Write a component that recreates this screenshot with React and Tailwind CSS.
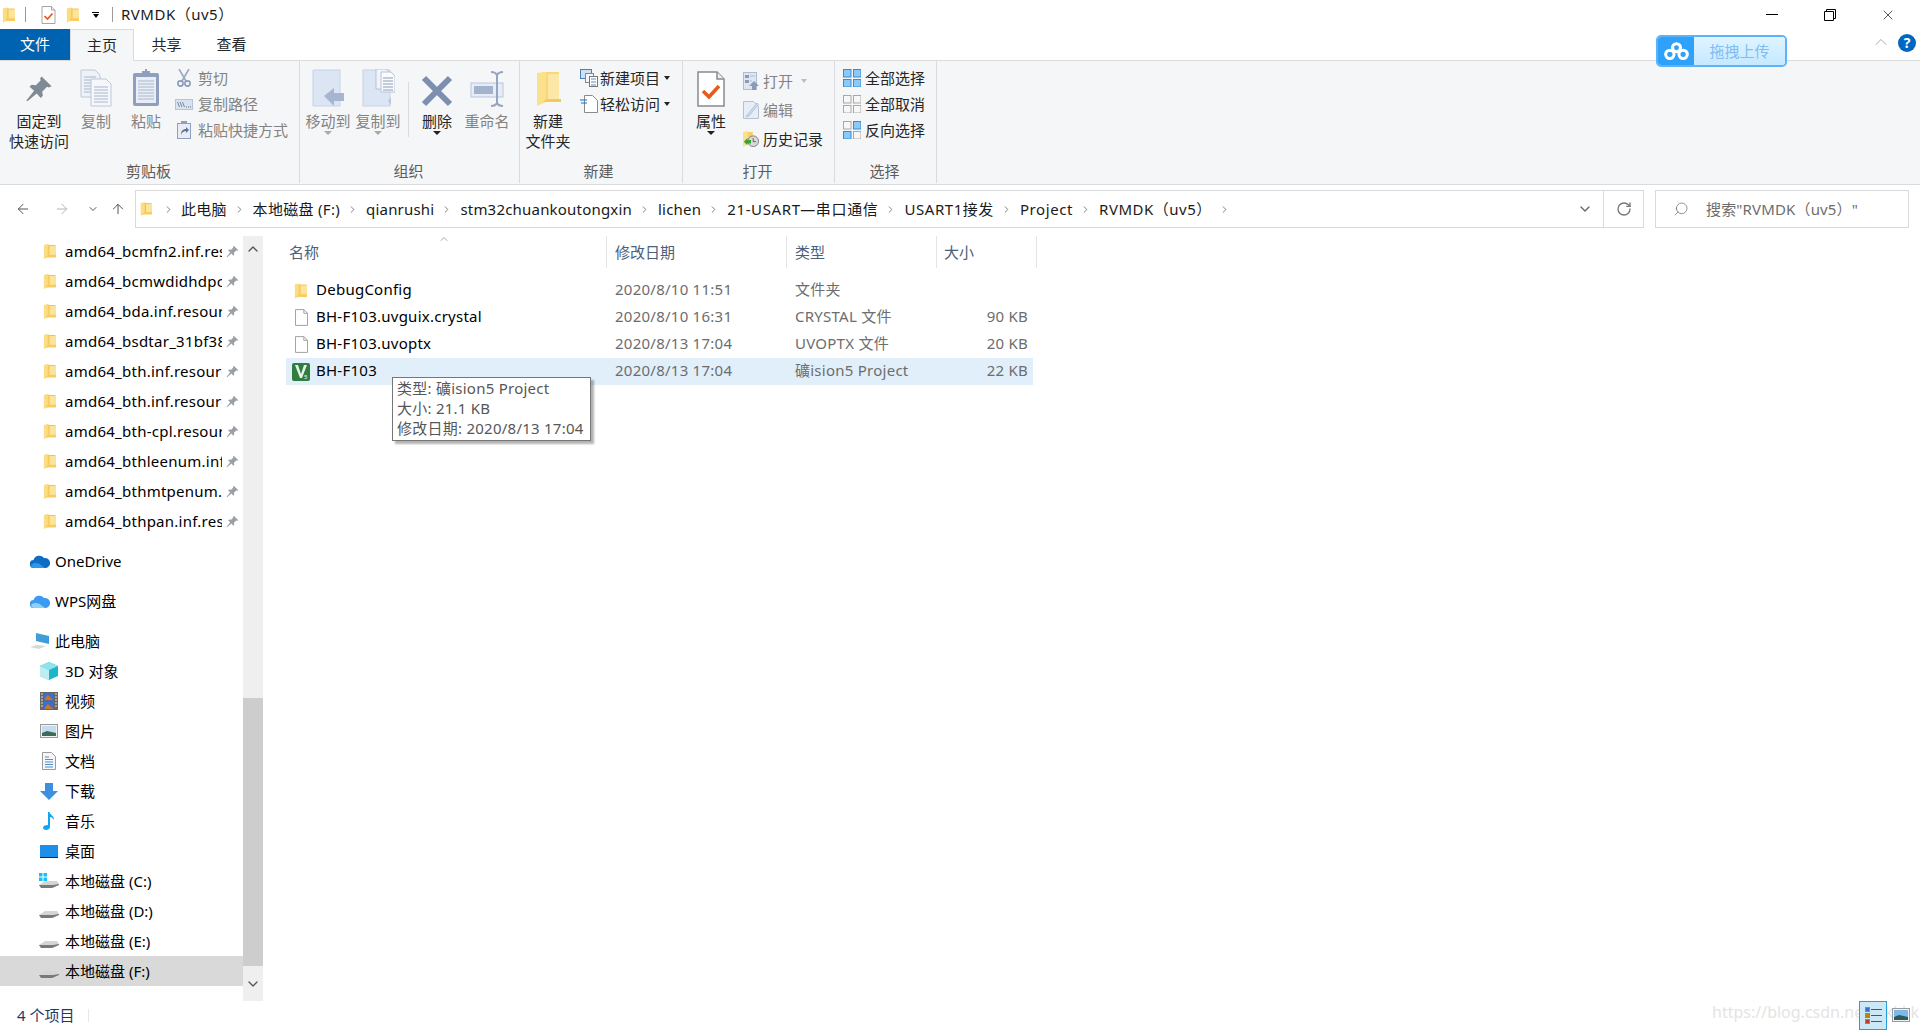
import { ArrowLeft, ArrowRight, ArrowUp, ChevronDown, ChevronRight, ChevronUp, RotateCw, Search, X } from "lucide-react";

const FONT = "font-['Noto_Sans','Noto_Sans_CJK_SC',sans-serif]";

const Folder = ({ className = "w-[14px] h-[17px]" }) => (
  <svg viewBox="0 0 14 17" className={className}>
    <path d="M4 1.5h9.5v12.5H4z" fill="#f2c14e" />
    <path d="M7 2.5h6.5v11H7z" fill="#fde49b" />
    <path d="M1 1.5 6 .5v13.5L1 16.5z" fill="#f9d36d" />
    <path d="M1 2 5 1v13l-4 2z" fill="#fcdc85" />
    <path d="M5 12h9v3H3z" fill="#f7cd61" />
  </svg>
);

const Pin = ({ className = "w-[13px] h-[13px]", fill = "#9aa0a6" }) => (
  <svg viewBox="0 0 16 16" className={className}>
    <path d="M9.5.8 15.2 6.4l-1.6.8-1-.5-2.8 2.8.4 2.4-1.2 1.2-2.3-2.5L1.4 15l-.6-.5 4.4-5.5-2.6-2.3L3.8 5.5l2.4.4L9 3l-.4-1z" fill={fill} />
  </svg>
);

const Doc = ({ className = "w-[14px] h-[18px]" }) => (
  <svg viewBox="0 0 14 18" className={className}>
    <path d="M.5.5h9l4 4v13H.5z" fill="#fff" stroke="#9b9b9b" />
    <path d="M9.5.5v4h4" fill="none" stroke="#9b9b9b" />
  </svg>
);

const CheckDoc = ({ className = "w-[15px] h-[18px]" }) => (
  <svg viewBox="0 0 28 36" className={className}>
    <path d="M1 1h19l7 7v27H1z" fill="#fff" stroke="#8a8a8a" strokeWidth="1.5" />
    <path d="M20 1v7h7" fill="#eee" stroke="#8a8a8a" strokeWidth="1.5" />
    <path d="M6 20l6 6 10-11" fill="none" stroke="#e8591c" strokeWidth="3.5" />
  </svg>
);

const Lines = ({ x, y, w, n, gap = 3, color = "#a9b6cc" }) => (
  <>
    {Array.from({ length: n }, (_, i) => (
      <path key={i} d={`M${x} ${y + i * gap}h${w}`} stroke={color} strokeWidth="1" />
    ))}
  </>
);

const CopyIcon = () => (
  <svg viewBox="0 0 32 38" className="w-[32px] h-[38px]">
    <path d="M1 1h14l5 5v22H1z" fill="#eef2f8" stroke="#bcc8da" />
    <Lines x={4} y={8} w={12} n={6} />
    <path d="M11 10h15l5 5v22H11z" fill="#f5f7fb" stroke="#bcc8da" />
    <Lines x={14} y={18} w={14} n={6} gap={3} />
  </svg>
);

const PasteIcon = () => (
  <svg viewBox="0 0 28 38" className="w-[28px] h-[38px]">
    <rect x="1" y="4" width="26" height="33" rx="2" fill="#8f9fbd" />
    <rect x="4" y="8" width="20" height="26" fill="#e9eef6" />
    <Lines x={6} y={12} w={16} n={7} />
    <path d="M10 5V2h3V0h2v2h3v3l2 2H8z" fill="#8f9fbd" />
  </svg>
);

const MoveIcon = ({ copy }) => (
  <svg viewBox="0 0 33 38" className="w-[33px] h-[38px]">
    <path d="M1 1h27v36H1z" fill="#dbe5f3" stroke="#c6d3e7" />
    {copy ? (
      <>
        <path d="M14 0h10l4 4v16H14z" fill="#f1f4f9" stroke="#b6c3d8" />
        <path d="M19 3h10l4 4v16H19z" fill="#fafbfd" stroke="#b6c3d8" />
        <Lines x={21} y={9} w={10} n={5} color="#8d9cb8" />
        <path d="M26 32l3-4v8z" fill="#b9c7dc" />
      </>
    ) : (
      <path d="M12 27l10-8v5h10v8H22v5z" fill="#a7b6d0" />
    )}
  </svg>
);

const DeleteIcon = () => (
  <svg viewBox="0 0 32 32" className="w-[32px] h-[32px]">
    <path d="M3 3l26 26M29 3 3 29" stroke="#7d8fb0" strokeWidth="6" />
  </svg>
);

const RenameIcon = () => (
  <svg viewBox="0 0 34 36" className="w-[34px] h-[36px]">
    <rect x="1" y="12" width="32" height="14" fill="#e7edf7" stroke="#b7c5db" />
    <rect x="4" y="15" width="19" height="8" fill="#a3b3cd" />
    <path d="M21 1c3 0 5 1 6 3 1-2 3-3 6-3M27 4v28M21 35c3 0 5-1 6-3 1 2 3 3 6 3" fill="none" stroke="#95a5c1" strokeWidth="2" />
  </svg>
);

const BigFolder = () => (
  <svg viewBox="0 0 25 36" className="w-[25px] h-[36px]">
    <path d="M6 1h17v28H6z" fill="#f7d777" />
    <path d="M12 3h11v26H12z" fill="#fce7a6" />
    <path d="M1 2l9-1v30l-9 4z" fill="#fbe08e" />
    <path d="M10 28h15v3H7z" fill="#f3c95c" />
  </svg>
);

const CutIcon = () => (
  <svg viewBox="0 0 14 18" className="w-[14px] h-[18px]">
    <path d="M2 0l7 12M12 0 5 12" stroke="#9aa8c0" strokeWidth="1.6" fill="none" />
    <circle cx="3.5" cy="14.5" r="2.6" fill="none" stroke="#8b9bb8" strokeWidth="1.6" />
    <circle cx="10.5" cy="14.5" r="2.6" fill="none" stroke="#8b9bb8" strokeWidth="1.6" />
  </svg>
);

const PathIcon = () => (
  <svg viewBox="0 0 18 11" className="w-[18px] h-[11px]">
    <rect x=".5" y=".5" width="17" height="10" fill="#d9e3f0" stroke="#b6c3d8" />
    <path d="M2.5 3l2 5M5 3l2 5M7.500 3l2 5" stroke="#5d6f8d" strokeWidth=".8" />
    <path d="M11 8h1M13 8h1M15 8h1" stroke="#5d6f8d" />
  </svg>
);

const ShortcutIcon = () => (
  <svg viewBox="0 0 14 18" className="w-[14px] h-[18px]">
    <rect x=".5" y="2.5" width="13" height="15" fill="#e8edf5" stroke="#8f9fbd" />
    <rect x="4" y="0" width="6" height="3" fill="#8f9fbd" />
    <path d="M4 14c0-4 2-6 5-6V6l3 3-3 3v-2c-2 0-4 1-5 4z" fill="#5e7196" />
  </svg>
);

const NewItemIcon = () => (
  <svg viewBox="0 0 18 18" className="w-[18px] h-[18px]">
    <rect x=".5" y=".5" width="11" height="9" fill="#cfe2f5" stroke="#4f7fb0" />
    <rect x="5.5" y="4.5" width="8" height="9" fill="#f7f7f7" stroke="#888" />
    <rect x="9.5" y="7.5" width="8" height="10" fill="#fff" stroke="#777" />
    <Lines x={11} y={10} w={5} n={3} color="#5e8fc0" />
  </svg>
);

const EasyIcon = () => (
  <svg viewBox="0 0 18 18" className="w-[18px] h-[18px]">
    <path d="M4.500.5h8l5 5v12h-13z" fill="#fff" stroke="#8a8a8a" />
    <path d="M0 5h7M1 8h6" stroke="#1c6fc0" strokeWidth="1.2" />
  </svg>
);

const OpenIcon = () => (
  <svg viewBox="0 0 16 18" className="w-[16px] h-[18px]">
    <rect x=".5" y=".5" width="13" height="17" fill="#dfe6f1" stroke="#aebcd2" />
    <rect x="2" y="3" width="4" height="3" fill="#8a9bb8" />
    <rect x="2" y="8" width="4" height="3" fill="#8a9bb8" />
    <path d="M7 4h5M7 9h2" stroke="#aebcd2" />
    <path d="M11 9l5 5h-3v4H9v-4H6z" fill="#8a9bb8" />
  </svg>
);

const EditIcon = () => (
  <svg viewBox="0 0 16 18" className="w-[16px] h-[18px]">
    <path d="M.5.5h10l5 5v12H.5z" fill="#e8eef7" stroke="#b3c1d7" />
    <path d="M4 14 14 2l1.500 1.500L6 15l-3 1z" fill="#cfd9e8" stroke="#a8b7cf" strokeWidth=".7" />
  </svg>
);

const HistoryIcon = () => (
  <svg viewBox="0 0 18 18" className="w-[18px] h-[18px]">
    <path d="M0 1l5-1v15l-5 3z" fill="#fbe08e" />
    <path d="M5 1h6v12H5z" fill="#f5cf68" />
    <circle cx="11.5" cy="11.5" r="6" fill="#d9d9d9" stroke="#777" />
    <path d="M11.5 8v4h3" fill="none" stroke="#555" />
    <path d="M1 12l4-4v2h4v4H5v2z" fill="#35a53a" />
  </svg>
);

const Grid = ({ a, b, c, d }) => (
  <svg viewBox="0 0 18 18" className="w-[18px] h-[18px]">
    {[[0, 0, a], [10, 0, b], [0, 10, c], [10, 10, d]].map(([x, y, on]) => (
      <rect
        key={`${x}${y}`}
        x={x + 0.5}
        y={y + 0.5}
        width="7.5"
        height="7.5"
        fill={on ? "#8ec8f5" : "#f7f7f7"}
        stroke={on ? "#2e8fdc" : "#a8a8a8"}
      />
    ))}
  </svg>
);

const BigBtn = ({ icon, lines, gray, caret, w = "w-[50px]", h = "h-[50px]" }) => (
  <div className={`${w} flex flex-col items-center shrink-0`}>
    <div className={`${h} flex items-end justify-center pb-[4px]`}>{icon}</div>
    <div className={`text-center leading-[20px] ${gray ? "text-[#838383]" : "text-[#262626]"}`}>
      {lines.map((l) => (
        <div key={l} className="whitespace-nowrap">{l}</div>
      ))}
    </div>
    {caret && <div className={`mt-0 w-0 h-0 border-x-[4px] border-t-[4px] border-x-transparent ${caret}`} />}
  </div>
);

const SmallBtn = ({ icon, label, gray, caret, iconW = "w-[18px]", h = "h-[26px]", gap = "gap-[5px]" }) => (
  <div className={`flex items-center ${h} ${gap} whitespace-nowrap ${gray ? "text-[#838383]" : "text-[#262626]"}`}>
    <div className={`${iconW} flex justify-center`}>{icon}</div>
    <span>{label}</span>
    {caret && <div className={`ml-[1px] w-0 h-0 border-x-[3.5px] border-t-[4px] border-x-transparent ${caret}`} />}
  </div>
);

const Group = ({ label, width, children, labelPad = "pr-[2px]" }) => (
  <div className={`${width} h-full flex flex-col border-r border-[#dadbdc] shrink-0`}>
    <div className="flex-1 flex">{children}</div>
    <div className={`h-[26px] text-center text-[#5c5c5c] leading-[28px] ${labelPad}`}>{label}</div>
  </div>
);

const Ribbon = () => (
  <div className="h-[124px] bg-[#f5f6f7] border-b border-[#dadbdc] flex pb-[1px]">
    <Group label="剪贴板" width="w-[300px]">
      <BigBtn w="w-[70px] ml-[4px] -mr-[3px]" icon={<Pin className="w-[28px] h-[28px] mb-[4px]" fill="#7f8a94" />} lines={["固定到", "快速访问"]} />
      <BigBtn icon={<CopyIcon />} lines={["复制"]} gray />
      <BigBtn icon={<PasteIcon />} lines={["粘贴"]} gray />
      <div className="pt-[4px] ml-[4px]">
        <SmallBtn gray icon={<CutIcon />} label="剪切" />
        <SmallBtn gray icon={<PathIcon />} label="复制路径" />
        <SmallBtn gray icon={<ShortcutIcon />} label="粘贴快捷方式" />
      </div>
    </Group>
    <Group label="组织" width="w-[220px]">
      <div className="ml-[3px] flex h-[55px] border-r border-[#dadbdc] mt-[21px] pr-[5px]">
        <div className="-mt-[21px] flex">
          <BigBtn icon={<MoveIcon />} lines={["移动到"]} gray caret="border-t-[#a9a9a9]" />
          <BigBtn icon={<MoveIcon copy />} lines={["复制到"]} gray caret="border-t-[#a9a9a9]" />
        </div>
      </div>
      <div className="ml-[3px] flex">
        <BigBtn icon={<DeleteIcon />} lines={["删除"]} caret="border-t-[#222]" />
        <BigBtn icon={<RenameIcon />} lines={["重命名"]} gray />
      </div>
    </Group>
    <Group label="新建" width="w-[163px]" labelPad="pr-[5px]">
      <BigBtn w="w-[56px]" icon={<BigFolder />} lines={["新建", "文件夹"]} />
      <div className="pt-[4px] ml-[3px]">
        <SmallBtn gap="gap-[2px]" iconW="w-[19px]" icon={<NewItemIcon />} label="新建项目" caret="border-t-[#222] ml-[2px]" />
        <SmallBtn gap="gap-[2px]" iconW="w-[19px]" icon={<EasyIcon />} label="轻松访问" caret="border-t-[#222] ml-[2px]" />
      </div>
    </Group>
    <Group label="打开" width="w-[152px]">
      <BigBtn w="w-[56px]" icon={<CheckDoc className="w-[28px] h-[36px]" />} lines={["属性"]} caret="border-t-[#222]" />
      <div className="pt-[5px] ml-[4px]">
        <SmallBtn gap="gap-[4px]" h="h-[29px]" iconW="w-[16px]" gray icon={<OpenIcon />} label="打开" caret="border-t-[#bdbdbd] ml-[4px]" />
        <SmallBtn gap="gap-[4px]" h="h-[29px]" iconW="w-[16px]" gray icon={<EditIcon />} label="编辑" />
        <SmallBtn gap="gap-[4px]" h="h-[29px]" iconW="w-[16px]" icon={<HistoryIcon />} label="历史记录" />
      </div>
    </Group>
    <Group label="选择" width="w-[102px]">
      <div className="pt-[4px] pl-[8px]">
        <SmallBtn gap="gap-[4px]" icon={<Grid a b c d />} label="全部选择" />
        <SmallBtn gap="gap-[4px]" icon={<Grid />} label="全部取消" />
        <SmallBtn gap="gap-[4px]" icon={<Grid b c />} label="反向选择" />
      </div>
    </Group>
  </div>
);

const WinButtons = () => (
  <div className="ml-auto flex items-center pr-[26px] gap-[46px]">
    <div className="w-[12px] h-[1px] bg-black" />
    <svg viewBox="0 0 12 12" className="w-[12px] h-[12px]">
      <path d="M.5 2.5h9v9h-9zM2.5 2.5v-2h9v9h-2" fill="none" stroke="#000" />
    </svg>
    <X className="w-[16px] h-[16px] -mx-[2px]" strokeWidth={1} color="#000" />
  </div>
);

const TitleBar = () => (
  <div className="h-[29px] flex items-center bg-white">
    <div className="w-[12px] ml-[2px] mr-[11px]"><Folder className="w-[13px] h-[16px]" /></div>
    <div className="w-[1px] h-[15px] bg-[#9a9a9a]" />
    <div className="ml-[15px]"><CheckDoc /></div>
    <div className="ml-[10px]"><Folder className="w-[13px] h-[16px]" /></div>
    <div className="ml-[13px] flex flex-col items-center gap-[1px]">
      <div className="w-[7px] h-[1px] bg-black" />
      <div className="w-0 h-0 border-x-[3.5px] border-t-[4px] border-x-transparent border-t-black" />
    </div>
    <div className="ml-[13px] w-[1px] h-[15px] bg-[#9a9a9a]" />
    <span className="ml-[8px] pb-[2px] text-[15px] text-[#1a1a1a] tracking-[0.5px]">RVMDK（uv5）</span>
    <WinButtons />
  </div>
);

const TabBar = () => (
  <div className="h-[32px] flex relative border-b border-[#dadbdc]">
    <div className="w-[70px] h-[31px] pb-[2px] bg-[#0063b1] text-white flex items-center justify-center">文件</div>
    <div className="w-[64px] h-[32px] pb-[2px] bg-[#f5f6f7] border-x border-t border-[#dadbdc] flex items-center justify-center text-[#262626]">主页</div>
    <div className="w-[65px] pb-[2px] flex items-center justify-center text-[#262626]">共享</div>
    <div className="w-[65px] pb-[2px] flex items-center justify-center text-[#262626]">查看</div>
    <div className="absolute left-[1656px] top-[6px] w-[131px] h-[32px] rounded-[5px] border-2 border-[#5cb3fa] flex overflow-hidden z-10">
      <div className="w-[36px] bg-[#2ea1fb] flex items-center justify-center">
        <svg viewBox="0 0 26 20" className="w-[25px] h-[19px]">
          <g fill="none" stroke="#fff" strokeWidth="3.2">
            <circle cx="13" cy="6" r="4.2" />
            <circle cx="6" cy="13" r="4.4" />
            <circle cx="20" cy="13" r="4.4" />
          </g>
        </svg>
      </div>
      <div className="flex-1 bg-gradient-to-b from-[#dff4ff] to-[#c5e9ff] text-[#7fbdf3] flex items-center justify-center">拖拽上传</div>
    </div>
    <ChevronUp className="absolute left-[1871px] top-[3px] w-[20px] h-[20px]" strokeWidth={1} color="#9a9a9a" />
    <div className="absolute left-[1898px] top-[5px] w-[18px] h-[18px] rounded-full bg-[#0067c0] text-white text-[14px] font-bold flex items-center justify-center">?</div>
  </div>
);

const crumbs = [
  ["此电脑", "tracking-[0.2px]"],
  ["本地磁盘 (F:)", "tracking-[0.3px]"],
  ["qianrushi", "tracking-[0.2px]"],
  ["stm32chuankoutongxin", "tracking-[0.2px]"],
  ["lichen", "tracking-[0.2px]"],
  ["21-USART—串口通信", "tracking-[0.65px]"],
  ["USART1接发", "tracking-[0.55px]"],
  ["Project", "tracking-[0.6px]"],
  ["RVMDK（uv5）", "tracking-[0.5px]"],
];

const AddressBar = () => (
  <div className="h-[38px] mt-[5px] flex items-center">
    <div className="w-[135px] flex items-center text-[#555] shrink-0">
      <ArrowLeft className="ml-[15px] w-[16px] h-[16px]" strokeWidth={1.5} />
      <ArrowRight className="ml-[23px] w-[16px] h-[16px] text-[#b5b5b5]" strokeWidth={1.5} />
      <ChevronDown className="ml-[17px] w-[12px] h-[12px]" strokeWidth={2} />
      <ArrowUp className="ml-[11px] w-[16px] h-[16px]" strokeWidth={1.5} />
    </div>
    <div className="w-[1509px] h-[38px] border border-[#d9d9d9] flex items-center shrink-0">
      <div className="ml-[4px] mr-[11px]"><Folder className="w-[12px] h-[16px]" /></div>
      <ChevronRight className="w-[11px] h-[11px] text-[#777]" strokeWidth={2} />
      <div className="-ml-[1px] flex items-center">
        {crumbs.map(([c, track]) => (
          <div key={c} className="flex items-center">
            <span className={`ml-[8px] pb-[1px] text-[#1a1a1a] whitespace-nowrap ${track}`}>{c}</span>
            <ChevronRight className="ml-[7px] w-[11px] h-[11px] text-[#777]" strokeWidth={2} />
          </div>
        ))}
      </div>
      <ChevronDown className="ml-auto mr-[10px] w-[16px] h-[16px] text-[#666]" strokeWidth={2} />
      <div className="w-[40px] h-full border-l border-[#d9d9d9] flex items-center justify-center">
        <RotateCw className="w-[16px] h-[16px] text-[#777]" strokeWidth={2} />
      </div>
    </div>
    <div className="ml-[11px] w-[254px] h-[38px] border border-[#d9d9d9] flex items-center shrink-0">
      <Search className="ml-[17px] w-[16px] h-[16px] -scale-x-100 text-[#777]" strokeWidth={1.2} />
      <span className="ml-[17px] pb-[1px] text-[#6d6d6d] tracking-[0.15px]">搜索"RVMDK（uv5）"</span>
    </div>
  </div>
);

const quick = [
  "amd64_bcmfn2.inf.resources",
  "amd64_bcmwdidhdpci.inf",
  "amd64_bda.inf.resources",
  "amd64_bsdtar_31bf3856",
  "amd64_bth.inf.resources",
  "amd64_bth.inf.resources",
  "amd64_bth-cpl.resources",
  "amd64_bthleenum.inf.res",
  "amd64_bthmtpenum.inf",
  "amd64_bthpan.inf.resources",
];

const Drive = ({ win }) => (
  <svg viewBox="0 0 20 16" className="w-[20px] h-[16px]">
    {win && <path d="M0 0h3.5v3.5H0zM4.5 0H8v3.5H4.5zM0 4.5h3.5V8H0zM4.5 4.5H8V8H4.5z" fill="#14c0f4" />}
    <path d="M0 12l6-4h12l2 3v1l-7 3H3z" fill="#d5d5d5" />
    <path d="M0 12l14 0 6-1v1l-7 3H2z" fill="#77797c" />
  </svg>
);

const lib = [
  ["3D 对象", <svg viewBox="0 0 18 18" className="w-[18px] h-[18px]"><path d="M9 0l9 4v10l-9 4-9-4V4z" fill="#1eb5cc" /><path d="M9 0l9 4-9 4-9-4z" fill="#8fe3ee" /><path d="M0 4l9 4v10l-9-4z" fill="#bdeef2" /></svg>],
  ["视频", <svg viewBox="0 0 18 18" className="w-[18px] h-[18px]"><rect width="18" height="18" fill="#666" /><rect x="4" y="1" width="10" height="7.5" fill="#3b6fc8" /><rect x="4" y="9.5" width="10" height="7.5" fill="#3b6fc8" /><path d="M5 6l3-3 3 3 2 2H5zM5 15l3-3 3 3 2 2H5z" fill="#d2712c" /><path d="M1 2h2M1 5h2M1 8h2M1 11h2M1 14h2M15 2h2M15 5h2M15 8h2M15 11h2M15 14h2" stroke="#ddd" /></svg>],
  ["图片", <svg viewBox="0 0 18 14" className="w-[18px] h-[14px]"><rect x=".5" y=".5" width="17" height="13" fill="#eef3f8" stroke="#9a9a9a" /><rect x="2" y="2" width="14" height="10" fill="#c4dcf0" /><path d="M2 9l5-2 9 2v3H2z" fill="#3f6a5a" /></svg>],
  ["文档", <svg viewBox="0 0 14 18" className="w-[14px] h-[18px]"><path d="M.5.5h9l4 4v13H.5z" fill="#f6f6f6" stroke="#9b9b9b" /><path d="M3 5h4M3 7.5h8M3 10h8M3 12.5h8M3 15h8" stroke="#4d8fc9" /></svg>],
  ["下载", <svg viewBox="0 0 18 17" className="w-[18px] h-[17px]"><path d="M5 0h8v8h5l-9 9-9-9h5z" fill="#3d8fe0" /></svg>],
  ["音乐", <svg viewBox="0 0 12 18" className="w-[12px] h-[18px]"><path d="M5 0h1.500c.5 3 5 4 4.500 8-1-2-3-3-4-3v10c0 2-2 3-4 3s-3-1-3-2.500S2 13 5 13z" fill="#12a5ef" /></svg>],
  ["桌面", <svg viewBox="0 0 18 13" className="w-[18px] h-[13px]"><rect width="18" height="13" fill="#1e8fe8" /><rect y="12" width="18" height="1" fill="#222" /></svg>],
  ["本地磁盘 (C:)", <Drive win />],
  ["本地磁盘 (D:)", <Drive />],
  ["本地磁盘 (E:)", <Drive />],
  ["本地磁盘 (F:)", <Drive />],
];

const NavRow = ({ icon, label, active }) => (
  <div className={`h-[30px] flex items-center pl-[39px] ${active ? "bg-[#d9d9d9]" : ""}`}>
    <div className="w-[20px] flex justify-center">{icon}</div>
    <span className="ml-[6px] pb-[1px] whitespace-nowrap text-black">{label}</span>
  </div>
);

const CloudRow = ({ label, color, light, mb = "mb-[10px]" }) => (
  <div className={`h-[30px] flex items-center pl-[30px] ${mb}`}>
    <svg viewBox="0 0 20 14" className="w-[20px] h-[14px]">
      <path d="M4 14a4 4 0 0 1-.5-8A6 6 0 0 1 14 4a5 5 0 0 1 2 10z" fill={color} />
      <path d="M1 11c3-3 8-2 10 0l4 3H4c-1.500 0-2.500-1-3-3z" fill={light} />
    </svg>
    <span className="ml-[5px] pb-[1px] text-black">{label}</span>
  </div>
);

const Sidebar = () => (
  <div className="w-[263px] flex shrink-0">
    <div className="w-[243px] overflow-hidden">
      {quick.map((q, i) => (
        <div key={i} className="h-[30px] flex items-center pl-[43px]">
          <Folder className="w-[13px] h-[17px]" />
          <div className="ml-[9px] pb-[1px] w-[157px] overflow-hidden whitespace-nowrap text-black tracking-[0.25px]">{q}</div>
          <Pin className="ml-[4px] w-[13px] h-[13px] shrink-0" />
        </div>
      ))}
      <div className="h-[10px]" />
      <CloudRow label="OneDrive" color="#0f6cc4" light="#2a9ae8" />
      <CloudRow label="WPS网盘" color="#3a9bf0" light="#8fd0fb" />
      <div className="h-[30px] flex items-center pl-[30px]">
        <svg viewBox="0 0 20 16" className="w-[20px] h-[16px]">
          <path d="M6 0l13 3v8L6 8z" fill="#3f9ed8" />
          <path d="M0 14l7-2 9 1-7 3z" fill="#d8d8d8" />
        </svg>
        <span className="ml-[5px] pb-[1px] text-black">此电脑</span>
      </div>
      {lib.map(([label, icon], i) => (
        <NavRow key={label} icon={icon} label={label} active={i === lib.length - 1} />
      ))}
    </div>
    <div className="w-[20px] h-[765px] bg-[#efefef] flex flex-col">
      <div className="h-[462px] flex justify-center pt-[5px]">
        <ChevronUp className="w-[16px] h-[16px] text-[#555]" strokeWidth={2} />
      </div>
      <div className="h-[268px] bg-[#cdcdcd]" />
      <div className="flex-1 flex items-center justify-center">
        <ChevronDown className="w-[16px] h-[16px] text-[#555]" strokeWidth={2} />
      </div>
    </div>
  </div>
);

const files = [
  ["DebugConfig", "2020/8/10 11:51", "文件夹", "", "folder"],
  ["BH-F103.uvguix.crystal", "2020/8/10 16:31", "CRYSTAL 文件", "90 KB", "doc"],
  ["BH-F103.uvoptx", "2020/8/13 17:04", "UVOPTX 文件", "20 KB", "doc"],
  ["BH-F103", "2020/8/13 17:04", "礦ision5 Project", "22 KB", "uv"],
];

const UvIcon = () => (
  <svg viewBox="0 0 18 18" className="w-[18px] h-[18px]">
    <rect width="18" height="18" rx="2" fill="#2f7d3f" />
    <path d="M3 2h3l3 9 3-9h3l-5 13H8z" fill="#e6f2e6" />
    <text x="12" y="16" fontSize="6" fill="#fff">5</text>
  </svg>
);

const HeaderCell = ({ width, label, pad = "pl-[8px]" }) => (
  <div className={`${width} ${pad} h-full flex items-center border-r border-[#e5e5e5] text-[#4c607a] shrink-0`}>{label}</div>
);

const FileList = () => (
  <div className="flex-1 relative">
    <ChevronUp className="absolute left-[175px] top-[-3px] w-[12px] h-[12px] text-[#888]" strokeWidth={1.5} />
    <div className="h-[32px] flex ml-[20px]">
      <HeaderCell width="w-[324px]" label="名称" pad="pl-[6px]" />
      <HeaderCell width="w-[180px]" label="修改日期" />
      <HeaderCell width="w-[150px]" label="类型" />
      <HeaderCell width="w-[100px]" label="大小" pad="pl-[7px]" />
    </div>
    <div className="mt-[9px] ml-[23px] w-[747px] tracking-[0.25px]">
      {files.map(([name, date, type, size, kind]) => (
        <div key={name} className={`h-[27px] flex items-center ${kind === "uv" ? "bg-[#e1effb]" : ""}`}>
          <div className="w-[321px] flex items-center pl-[6px]">
            <div className="w-[18px] flex justify-center">
              {kind === "folder" && <Folder className="w-[13px] h-[16px] -ml-[2px]" />}
              {kind === "doc" && <Doc className="w-[13px] h-[17px]" />}
              {kind === "uv" && <UvIcon />}
            </div>
            <span className="ml-[6px] pb-[3px] text-black">{name}</span>
          </div>
          <div className="w-[8px]" />
          <div className="w-[180px] pb-[3px] text-[#6d6d6d]">{date}</div>
          <div className="w-[150px] pb-[3px] text-[#6d6d6d] whitespace-nowrap">{type}</div>
          <div className="w-[83px] pb-[3px] text-right text-[#6d6d6d]">{size}</div>
        </div>
      ))}
    </div>
    <div className="absolute left-[129px] top-[141px] w-[199px] h-[64px] bg-white border border-[#767676] shadow-[3px_3px_2px_rgba(0,0,0,0.3)] pl-[4px] text-[#575757] leading-[20px] whitespace-nowrap tracking-[0.25px]">
      <div>类型: 礦ision5 Project</div>
      <div>大小: 21.1 KB</div>
      <div>修改日期: 2020/8/13 17:04</div>
    </div>
  </div>
);

const StatusBar = () => (
  <div className="h-[30px] flex items-center pl-[17px] relative">
    <span className="text-[#1f3a5f]">4 个项目</span>
    <div className="ml-[14px] w-[1px] h-[13px] bg-[#e8e8e8]" />
    <span className="absolute left-[1712px] top-[2px] text-[16px] text-[#e4e4e4] whitespace-nowrap">https://blog.csdn.net/Kkkkkk</span>
    <div className="absolute right-[33px] top-[1px] w-[28px] h-[29px] bg-[#cce8f7] border border-[#26a0da] flex flex-col items-center justify-center gap-[1px]">
      {["#3b6fc8", "#b8860b", "#c0392b"].map((c) => (
        <div key={c} className="flex items-center gap-[1px]">
          <div className="w-[5px] h-[5px] border border-[#888]" style={{ backgroundColor: c }} />
          <div className="w-[11px] h-[1px] bg-[#555]" />
        </div>
      ))}
    </div>
    <svg viewBox="0 0 18 14" className="absolute right-[10px] top-[8px] w-[18px] h-[14px]">
      <rect x=".5" y=".5" width="17" height="13" fill="#eef3f8" stroke="#9a9a9a" />
      <rect x="2" y="2" width="14" height="10" fill="#7db8e8" />
      <path d="M2 9l5-2 9 2v3H2z" fill="#2f5a55" />
    </svg>
  </div>
);

export default function App() {
  return (
    <div className={`w-[1920px] h-[1030px] overflow-hidden bg-white text-[15px] leading-[20px] ${FONT}`}>
      <TitleBar />
      <TabBar />
      <Ribbon />
      <AddressBar />
      <div className="h-[764px] mt-[8px] flex">
        <Sidebar />
        <FileList />
      </div>
      <StatusBar />
    </div>
  );
}
